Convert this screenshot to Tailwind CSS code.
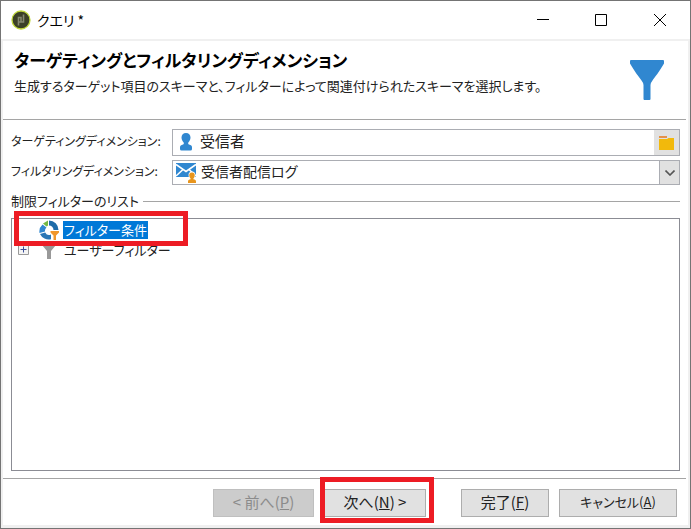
<!DOCTYPE html>
<html lang="ja">
<head>
  <meta charset="UTF-8" />
  <meta name="viewport" content="width=device-width, initial-scale=1.0" />
  <title>クエリ *</title>
  <script src="https://cdn.jsdelivr.net/npm/@tailwindcss/browser@4"></script>
</head>
<body class="min-h-screen flex flex-col bg-white border border-[#747474] text-[#222] text-[15px] leading-5 font-['Noto_Sans_CJK_JP',sans-serif] [font-feature-settings:'palt']">

  <!-- Title bar -->
  <header class="h-[38px] shrink-0 flex items-center justify-between pl-[10px] text-black">
    <div class="flex items-center gap-[6px]">
      <svg class="size-5" viewBox="0 0 20 20">
        <circle cx="10" cy="10" r="9" fill="#3b4026" stroke="#bfd63a" stroke-width="1.3" />
        <path d="M7.500 15.500V7.500H10V12H7.500M12.500 4.500V12H10V7.500" fill="none" stroke="#85886f" stroke-width="1.600" />
      </svg>
      <h1 class="text-sm">クエリ *</h1>
    </div>
    <div class="flex">
      <button type="button" aria-label="最小化" class="w-[58px] h-9 flex items-center justify-center">
        <svg class="size-3" viewBox="0 0 12 12"><path d="M0 5.500H12" stroke="#000" /></svg>
      </button>
      <button type="button" aria-label="最大化" class="w-[58px] h-9 flex items-center justify-center">
        <svg class="size-3" viewBox="0 0 12 12"><path d="M.5.5H11.500V11.500H.5Z" fill="none" stroke="#000" /></svg>
      </button>
      <button type="button" aria-label="閉じる" class="w-[60px] h-9 flex items-center justify-center">
        <svg class="size-3" viewBox="0 0 12 12"><path d="M0 0L12 12M12 0L0 12" stroke="#000" /></svg>
      </button>
    </div>
  </header>

  <div class="flex-1 flex flex-col border-2 border-b-3 border-[#f0f0f0]">

    <!-- Wizard heading -->
    <section class="h-[79px] shrink-0 flex justify-between border-b border-[#a5a5a5] pl-[11px] pr-[22px] mr-0.5">
      <div class="pt-[7px]">
        <h2 class="text-[17px] leading-6 font-bold text-black">ターゲティングとフィルタリングディメンション</h2>
        <p class="text-[13px] leading-7">生成するターゲット項目のスキーマと、フィルターによって関連付けられたスキーマを選択します。</p>
      </div>
      <svg class="w-[34px] h-10 mt-[19px] shrink-0" viewBox="0 0 34 40">
        <path d="M1 0H33Q34 0 34 1V3.500C29 12 25 17 22.500 20.500Q20.500 23 20.500 25V39Q20.500 40 19.500 40H14.500Q13.500 40 13.500 39V25Q13.500 23 11.500 20.500C9 17 5 12 0 3.500V1Q0 0 1 0Z" fill="#3087d0" />
      </svg>
    </section>

    <main class="flex-1 flex flex-col px-2 pt-[9px]">
      <!-- Dimension fields -->
      <div class="grid grid-cols-[161px_1fr] gap-y-1 items-center">
        <label for="target" class="text-xs pb-1 whitespace-nowrap">ターゲティングディメンション:</label>
        <div class="relative h-[27px] flex border border-[#abadb3]">
          <svg class="absolute left-[7px] top-[3px] w-3 h-[18px]" viewBox="0 0 12 18">
            <path d="M6 0C8.800 0 10.500 1.800 10.500 4.500C10.500 6.500 9.500 8.200 8.300 9.500C8 10.500 8.200 11.200 9 11.500C11 12 12 12.700 12 14.500V16Q12 17.500 10.500 17.500H1.500Q0 17.500 0 16V14.500C0 12.700 1 12 3 11.500C3.800 11.200 4 10.500 3.700 9.500C2.500 8.200 1.500 6.500 1.500 4.500C1.500 1.800 3.200 0 6 0Z" fill="#3087d0" />
          </svg>
          <input id="target" type="text" value="受信者" class="flex-1 min-w-0 pl-[27px] pb-1 outline-none" />
          <button type="button" aria-label="選択" class="w-[25px] flex items-center justify-center bg-[#e1e1e1]">
            <svg class="w-4 h-[14px]" viewBox="0 0 16 14">
              <path d="M0 0H8V2H0Z" fill="#e5914a" />
              <path d="M0 3H8L9.500 2H15V14H0Z" fill="#f2b90c" />
            </svg>
          </button>
        </div>

        <label for="filter" class="text-xs pb-1 whitespace-nowrap">フィルタリングディメンション:</label>
        <div class="relative h-[25px] flex border border-[#abadb3]">
          <svg class="absolute left-[3px] top-[2px] w-5 h-5" viewBox="0 0 20 20">
            <path d="M0 0H20V14H0Z" fill="#3087d0" />
            <path d="M0 1.500L10 8.500L20 1.500M0 13L7 6.500M20 13L13 6.500" fill="none" stroke="#fff" stroke-width="1.600" />
            <path d="M11 20V16.500L13 14.500C11.800 11 13 8.500 16 8.500S20.200 11 19 14.500L21 16.500V20Z" fill="#fff" />
            <path d="M16 9.500C18.200 9.500 19 11.200 18.700 13C18.500 14.200 17.900 15 17.400 15.500V16.200C19 16.600 20 17 20 18.500V20H12V18.500C12 17 13 16.600 14.600 16.200V15.500C14.100 15 13.500 14.200 13.300 13C13 11.200 13.800 9.500 16 9.500Z" fill="#e8951d" />
          </svg>
          <select id="filter" class="flex-1 min-w-0 appearance-none pl-7 pb-1 text-sm outline-none">
            <option>受信者配信ログ</option>
          </select>
          <span class="w-5 flex items-center justify-center border-l border-[#abadb3] bg-[#e1e1e1] pointer-events-none">
            <svg class="w-[10px] h-[6px]" viewBox="0 0 10 6"><path d="M0.500 .5L5 5L9.500 .5" fill="none" stroke="#555" stroke-width="1.600" /></svg>
          </span>
        </div>
      </div>

      <!-- Filter list -->
      <div class="flex items-center gap-1 mt-[6px]">
        <h3 class="text-[13px]">制限フィルターのリスト</h3>
        <hr class="flex-1 border-[#a5a5a5]" />
      </div>
      <ul class="relative flex-1 mt-[7px] border border-[#8b8c94] pt-px text-[13px]">
        <li class="h-[19px] flex items-center gap-1 pl-[27px]">
          <svg class="size-5" viewBox="0 0 20 20">
            <path d="M3.500 4.500L7.500 7.500A4.500 4.500 0 0 0 6 11.500L0.500 13A9.500 9.500 0 0 1 3.500 4.500Z" fill="#3087d0" />
            <path d="M4 3.500L9 .5V5.500L7.500 6.500Z" fill="#74b843" />
            <path d="M10 .5A9.500 9.500 0 0 1 19.500 10H14.500A4.500 4.500 0 0 0 10 5.500Z" fill="#1f6ca8" />
            <path d="M1 14L6.200 12.500A4.500 4.500 0 0 0 12 14.500V19.200A9.500 9.500 0 0 1 1 14Z" fill="#2a76b5" />
            <path d="M11.500 11H20V12.500L17 15.500V20H14.500V15.500L11.500 12.500Z" fill="#f0962a" stroke="#fff" stroke-width=".8" paint-order="stroke" />
          </svg>
          <span class="h-[18px] leading-[17px] px-px bg-[#0078d7] text-white">フィルター条件</span>
        </li>
        <li class="h-[21px] flex items-center pl-[6px]">
          <button type="button" aria-label="展開">
            <svg class="size-[11px]" viewBox="0 0 11 11">
              <path d="M.5.5H10.500V10.500H.5Z" fill="#f4f4f4" stroke="#999" />
              <path d="M2.500 5.500H8.500M5.500 2.500V8.500" stroke="#3b4f99" />
            </svg>
          </button>
          <svg class="w-[14px] h-[18px] ml-[13px]" viewBox="0 0 14 18">
            <path d="M0 0H14V4L9 10V18H5V10L0 4Z" fill="#999" />
          </svg>
          <span class="ml-2">ユーザーフィルター</span>
        </li>
        <li aria-hidden="true" class="absolute left-[2px] -top-2 w-[174px] h-[35px] border-5 border-[#ed1c24]"></li>
      </ul>
    </main>

    <!-- Wizard buttons -->
    <footer class="mt-[7px] mr-0.5 flex justify-end border-t border-[#a5a5a5] pt-[10px] pb-[8px] pr-[9px] leading-4">
      <button type="button" disabled class="w-[101px] h-7 mr-[10px] pb-0.5 border border-[#bfbfbf] bg-[#ccc] text-[#8b8b8b]">&lt; 前へ(<u>P</u>)</button>
      <div class="relative mr-[35px]">
        <button type="button" class="w-[102px] h-7 pb-0.5 border border-[#adadad] bg-[#e1e1e1]">次へ(<u>N</u>) &gt;</button>
        <span aria-hidden="true" class="absolute -left-1 -top-3 w-[114px] h-[46px] border-5 border-[#ed1c24] pointer-events-none"></span>
      </div>
      <button type="button" class="w-[88px] h-7 mr-[10px] pb-0.5 border border-[#adadad] bg-[#e1e1e1]">完了(<u>F</u>)</button>
      <button type="button" class="w-[118px] h-7 pb-0.5 text-[13px] border border-[#adadad] bg-[#e1e1e1]">キャンセル(<u>A</u>)</button>
    </footer>
  </div>
</body>
</html>
